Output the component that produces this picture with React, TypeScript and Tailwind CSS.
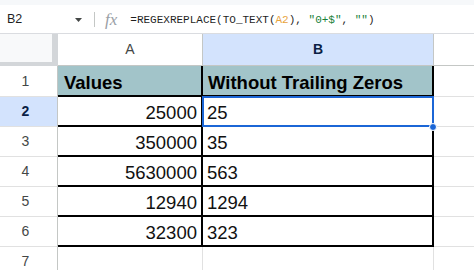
import React from "react";

const rows: [string, string][] = [
  ["25000", "25"],
  ["350000", "35"],
  ["5630000", "563"],
  ["12940", "1294"],
  ["32300", "323"],
];

export default function App() {
  return (
    <div className="w-[474px] h-[270px] overflow-hidden bg-white font-['Liberation_Sans',Arial,sans-serif]">
      <div className="h-[5px] bg-[#f6f8fa]" />
      <div className="h-[29px] flex items-center border-b border-[#dadce0] bg-white">
        <div className="w-[94px] flex items-center pl-[7px] pr-[12px] justify-between">
          <span className="text-[12.5px] text-[#1f1f1f] leading-none pt-[1px]">B2</span>
          <svg width="7" height="4" viewBox="0 0 7 4" className="mt-[1px]">
            <path d="M0 0 L7 0 L3.5 4 Z" fill="#444746" />
          </svg>
        </div>
        <div className="w-px h-[15px] bg-[#c4c7c5]" />
        <span className="ml-[10px] font-['Liberation_Serif',serif] italic text-[17px] text-[#9aa0a6] leading-none">
          fx
        </span>
        <span className="ml-[13px] font-['Liberation_Mono',monospace] text-[11px] text-[#1f1f1f] leading-none pt-[2px] whitespace-pre">
          =REGEXREPLACE(TO_TEXT(<span className="text-[#e8a33d]">A2</span>), <span className="text-[#188038]">"0+$"</span>, <span className="text-[#188038]">""</span>)
        </span>
      </div>

      <div className="relative grid grid-cols-[58px_145px_231px_1fr] grid-rows-[32px_31px_30px_30px_30px_30px_30px_30px]">
        {/* header row */}
        <div className="bg-[#f8f9fa] border-r-[6px] border-b-[4px] border-[#d3d6d9]" />
        <div className="flex items-center justify-center border-r border-b border-[#c4c7c5] text-[14px] text-[#444746]">
          A
        </div>
        <div className="flex items-center justify-center border-r border-b border-[#c4c7c5] bg-[#d3e3fd] text-[14px] font-bold text-[#0b1f45]">
          B
        </div>
        <div className="border-b border-[#c4c7c5]" />

        {/* row 1 */}
        <div className="flex items-center justify-center pr-[6px] border-r border-b border-r-[#c4c7c5] border-b-[#e1e1e1] text-[14px] text-[#444746]">
          1
        </div>
        <div className="flex items-end pl-[6px] pb-[2px] bg-[#a2c4c9] border-r-2 border-b-2 border-black text-[18.5px] font-bold text-black leading-[20px]">
          Values
        </div>
        <div className="flex items-end pl-[5px] pb-[2px] bg-[#a2c4c9] border-r-2 border-b-2 border-black text-[18.5px] font-bold text-black leading-[20px] whitespace-nowrap">
          Without Trailing Zeros
        </div>
        <div className="border-b border-[#e1e1e1]" />

        {rows.map(([a, b], i) => {
          const selected = i === 0;
          return (
            <React.Fragment key={i}>
              <div
                className={
                  selected
                    ? "flex items-center justify-center pr-[6px] border-r border-b border-r-[#c4c7c5] border-b-[#e1e1e1] bg-[#d3e3fd] text-[14px] font-bold text-[#0b1f45]"
                    : "flex items-center justify-center pr-[6px] border-r border-b border-r-[#c4c7c5] border-b-[#e1e1e1] text-[14px] text-[#444746]"
                }
              >
                {i + 2}
              </div>
              <div className="flex items-end justify-end pr-[4px] pb-[2px] border-r-2 border-b-2 border-black text-[18.5px] text-[#111] leading-[20px]">
                {a}
              </div>
              <div className="flex items-end pl-[4px] pb-[2px] border-r-2 border-b-2 border-black text-[18.5px] text-[#111] leading-[20px]">
                {b}
              </div>
              <div className="border-b border-[#e1e1e1]" />
            </React.Fragment>
          );
        })}

        {/* row 7 */}
        <div className="flex items-center justify-center pr-[6px] border-r border-b border-r-[#c4c7c5] border-b-[#e1e1e1] text-[14px] text-[#444746]">
          7
        </div>
        <div className="border-r border-b border-[#e1e1e1]" />
        <div className="border-r border-b border-[#e1e1e1]" />
        <div className="border-b border-[#e1e1e1]" />

        {/* selection */}
        <div className="absolute left-[202px] top-[62px] w-[232px] h-[31px] border-2 border-[#1b66d6] pointer-events-none" />
        <div className="absolute left-[429px] top-[89px] w-[8px] h-[8px] rounded-full bg-[#1b66d6] border border-white" />
      </div>
    </div>
  );
}
